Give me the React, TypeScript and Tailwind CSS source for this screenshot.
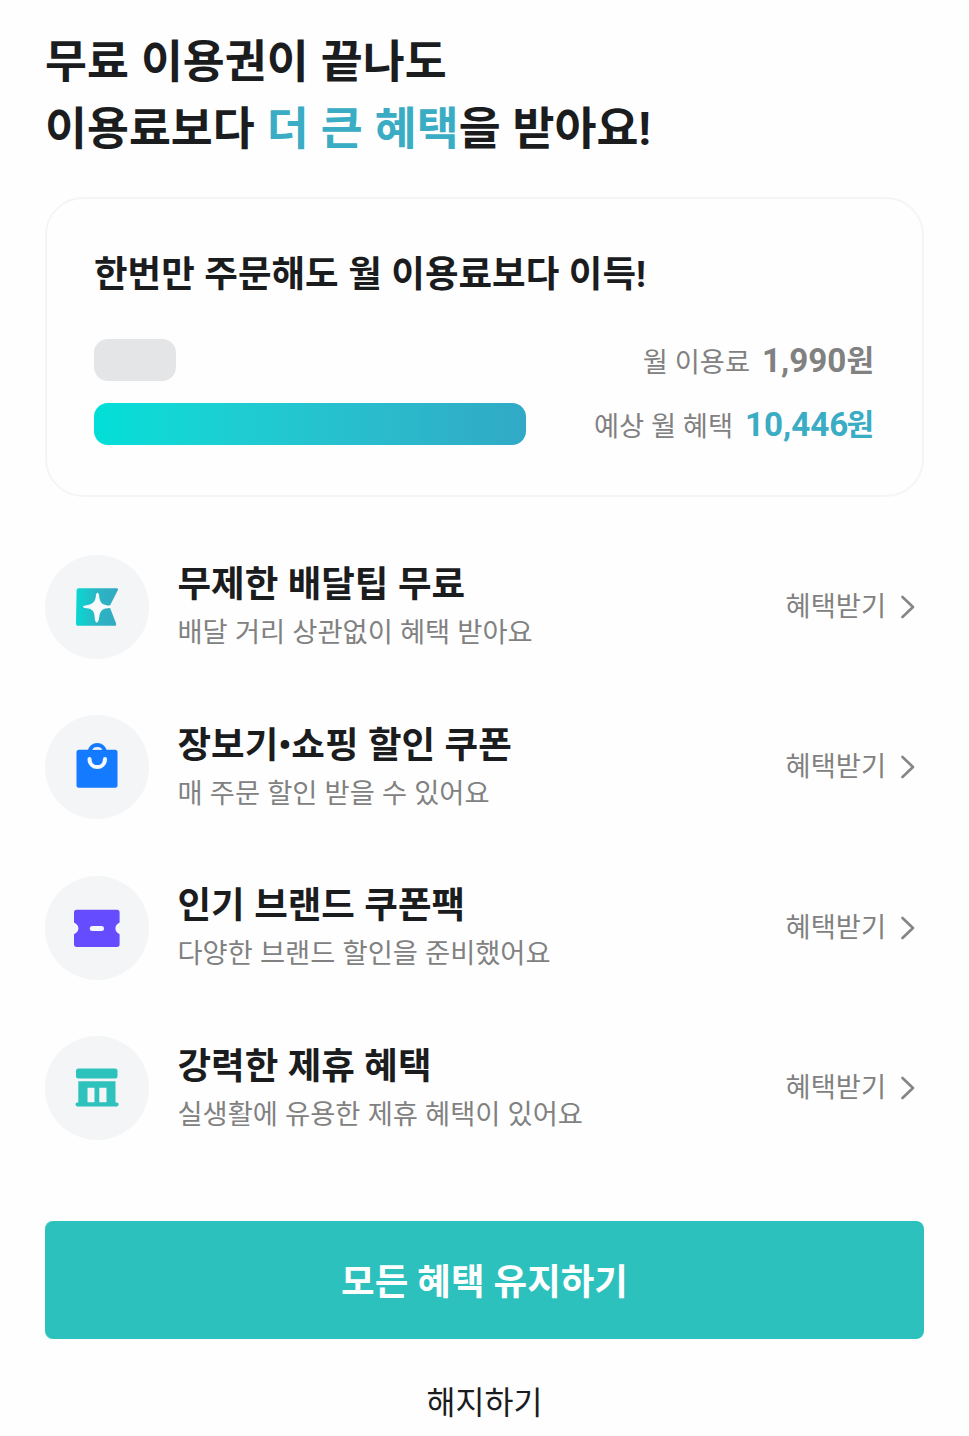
import type { ReactNode } from 'react'

interface Benefit {
  title: string
  description: string
  icon: ReactNode
}

function MembershipIcon() {
  return (
    <svg viewBox="0 0 52 52" className="size-13">
      <defs>
        <linearGradient id="membership" x1="5" y1="0" x2="47" y2="0" gradientUnits="userSpaceOnUse">
          <stop offset="0" stopColor="#08d8d2" />
          <stop offset="0.5" stopColor="#2bb5c4" />
          <stop offset="1" stopColor="#33a9c2" />
        </linearGradient>
      </defs>
      <path
        d="M7.8 7.2H45.5Q47.8 7.2 46.8 9.2L39 24.5Q38.5 25.6 39 26.7L45 42.2Q45.8 44.8 43.2 44.8H7.5Q4.9 44.8 5 42.2L5.6 9.4Q5.7 7.2 7.8 7.2Z"
        fill="url(#membership)"
      />
      <path
        d="M26.5 11.8Q27.9 11.8 28.2 15.5C28.8 21.5 31.3 23.8 36.5 24.4L40 24.6V27L36.5 27.2C31 27.8 28.8 30.5 28.2 36.2Q27.4 41.6 25.8 41.6Q24 41.6 23.7 36.2C23.3 30 21 27.7 15.8 27.2Q12 26.9 12 25.7Q12 24.6 15.8 24.2C21.3 23.4 24.2 21 24.8 15.5Q25.1 11.8 26.5 11.8Z"
        fill="#f7fbfc"
      />
    </svg>
  )
}

function BagIcon() {
  return (
    <svg viewBox="0 0 52 52" className="size-13">
      <path d="M18.5 11C19.5 1.6 33 1.6 34 11" fill="none" stroke="#147aff" strokeWidth="4" />
      <rect x="5.5" y="8.7" width="41" height="38" rx="2.5" fill="#147aff" />
      <path d="M22 8.8Q26 5.8 31 8.8Z" fill="#d5e7fd" />
      <path d="M18.5 18C18.5 28.8 34 28.8 34 18" fill="none" stroke="#f2f8fe" strokeWidth="4" strokeLinecap="round" />
    </svg>
  )
}

function TicketIcon() {
  return (
    <svg viewBox="0 0 52 52" className="size-13">
      <path
        d="M5.7 7.8H46Q48.6 7.8 48.6 10.5V20.5Q44.4 22.7 44.4 26.4Q44.4 30 48.6 32.2V42.3Q48.6 45 46 45H5.7Q3 45 3 42.3V32.2Q7.4 30 7.4 26.4Q7.4 22.7 3 20.5V10.5Q3 7.8 5.7 7.8Z"
        fill="#654cff"
      />
      <rect x="18.8" y="23.9" width="14.2" height="5" rx="2.5" fill="#f7f6ff" />
    </svg>
  )
}

function StoreIcon() {
  return (
    <svg viewBox="0 0 52 52" className="size-13" fill="#2ec2bc">
      <rect x="5" y="6.5" width="41.5" height="10" rx="2.5" />
      <path
        fillRule="evenodd"
        d="M7.3 19.3H44.5V40.5H46Q47.6 40.7 47.6 42.3Q47.6 44.4 45.8 44.4H6.3Q4.5 44.4 4.5 42.3Q4.5 40.7 6.3 40.5H7.3ZM16.5 25.7V40.2H23.5V25.7ZM28.3 25.7V40.2H35.5V25.7Z"
      />
    </svg>
  )
}

const benefits: Benefit[] = [
  { title: '무제한 배달팁 무료', description: '배달 거리 상관없이 혜택 받아요', icon: <MembershipIcon /> },
  { title: '장보기•쇼핑 할인 쿠폰', description: '매 주문 할인 받을 수 있어요', icon: <BagIcon /> },
  { title: '인기 브랜드 쿠폰팩', description: '다양한 브랜드 할인을 준비했어요', icon: <TicketIcon /> },
  { title: '강력한 제휴 혜택', description: '실생활에 유용한 제휴 혜택이 있어요', icon: <StoreIcon /> },
]

function BenefitRow({ title, description, icon }: Benefit) {
  return (
    <li className="flex h-[104px] items-center">
      <div className="flex size-[104px] shrink-0 items-center justify-center rounded-full bg-[#f3f5f7]">{icon}</div>
      <div className="ml-[28.5px] flex-1 pt-[5px] whitespace-nowrap">
        <h3 className="text-[36.5px] leading-[49px] font-bold text-[#1b1c1e] [word-spacing:0.4px]">{title}</h3>
        <p className="text-[27.3px] leading-[49px] text-[#818181] [word-spacing:0.4px]">{description}</p>
      </div>
      <button className="flex items-center gap-[15px] pr-[9px] text-[27.3px] leading-10 whitespace-nowrap text-[#818181]">
        혜택받기
        <svg viewBox="0 0 14 24" className="h-6 w-3.5" fill="none" stroke="#858585" strokeWidth="2.6">
          <path d="M1.5 2L12 12L1.5 22" strokeLinecap="round" strokeLinejoin="round" />
        </svg>
      </button>
    </li>
  )
}

export default function App() {
  return (
    <main className="min-h-[1436px] w-[969px] bg-[#fefefe] px-[45px] pt-[29px] font-['Roboto','Noto_Sans_CJK_KR',sans-serif]">
      <h1 className="text-[45.6px] leading-[67px] font-bold text-[#1b1c1e] [word-spacing:0.7px]">
        무료 이용권이 끝나도
        <br />
        이용료보다 <span className="text-[#3aacc4]">더 큰 혜택</span>을 받아요!
      </h1>

      <section className="mt-[34px] h-[300px] rounded-[38px] border-2 border-[#f4f5f6] px-[47px] pt-[49px]">
        <h2 className="text-[36.5px] leading-[54px] font-bold text-[#1b1c1e] [word-spacing:0.5px]">
          한번만 주문해도 월 이용료보다 이득!
        </h2>
        <div className="mt-[37px] flex h-[42px] items-center justify-between pr-px">
          <div className="h-full w-[82px] rounded-[14px] bg-[#e4e5e7]" />
          <p className="flex items-center gap-3 text-[27.3px] text-[#818181]">
            <span className="pt-1.5">월 이용료</span>
            <strong className="pt-0.5 text-[33.2px]">
              1,990<span className="inline-block -translate-y-px text-[30px]">원</span>
            </strong>
          </p>
        </div>
        <div className="mt-[22px] flex h-[42px] items-center justify-between pr-px">
          <div className="h-full w-[432px] rounded-[14px] bg-linear-to-r from-[#00dfd8] to-[#31a9c6]" />
          <p className="flex items-center gap-3 text-[27.3px] text-[#818181]">
            <span className="pt-1.5">예상 월 혜택</span>
            <strong className="pt-0.5 text-[33.2px] text-[#3aacc4]">
              10,446<span className="-ml-0.5 inline-block -translate-y-px text-[30px]">원</span>
            </strong>
          </p>
        </div>
      </section>

      <ul className="mt-[57.5px] flex flex-col gap-[56.6px]">
        {benefits.map((benefit) => (
          <BenefitRow key={benefit.title} {...benefit} />
        ))}
      </ul>

      <button className="mt-[80.5px] flex h-[118px] w-full items-center justify-center rounded-lg bg-[#2dc1bd] pt-[7px] text-[36.5px] font-bold text-white">
        모든 혜택 유지하기
      </button>
      <button className="mt-[41px] flex h-12 w-full items-center justify-center text-[31.5px] text-[#1b1c1e]">
        해지하기
      </button>
    </main>
  )
}
